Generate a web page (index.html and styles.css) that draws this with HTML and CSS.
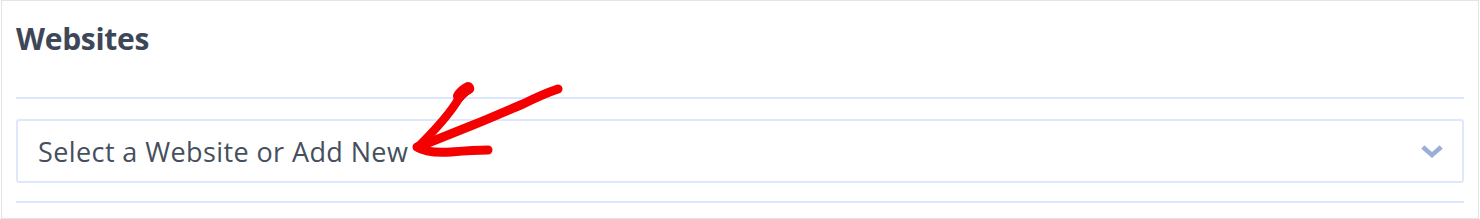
FILE: index.html
```html
<!DOCTYPE html>
<html lang="en">
<head>
    <meta charset="UTF-8">
    <meta name="viewport" content="width=device-width, initial-scale=1.0">
    <title>Websites</title>
    <link rel="stylesheet" href="styles.css">
</head>
<body>
    <div class="panel">
        <div class="panel-head">
            <h2>Websites</h2>
        </div>

        <div class="panel-body">
            <div class="select">
                <span class="select-label">Select a Website or Add New</span>
                <svg class="chevron" width="22" height="13" viewBox="0 0 22 13">
                    <path d="M3.5 3.5 L11 10 L18.5 3.5" fill="none" stroke="#9aaed8" stroke-width="4.5" stroke-linecap="square"/>
                </svg>
            </div>
        </div>

        <!-- hand-drawn annotation -->
        <svg class="arrow" width="180" height="90" viewBox="0 0 180 90">
            <g fill="none" stroke="#f40000" stroke-linecap="round" stroke-linejoin="round">
                <path d="M157 14 C 145 18, 132 24, 122 29 C 105 36, 90 43, 72 50 C 52 58, 32 66, 17 72" stroke-width="9"/>
                <path d="M69 14 C 62 18, 58 22, 55 28 C 46 42, 33 56, 17 72" stroke-width="8.5"/>
                <path d="M67 13 C 63 15, 60 18, 58 21" stroke-width="12"/>
                <path d="M16 72 C 22 76, 34 78, 50 77 C 62 76, 76 75, 87 75" stroke-width="9"/>
            </g>
        </svg>
    </div>
</body>
</html>
```

FILE: styles.css
```css
body {
    margin: 0;
    background: #fff;
    font-family: "Open Sans", "Liberation Sans", sans-serif;
}

.panel {
    position: relative;
    box-sizing: border-box;
    width: 1478px;
    height: 219px;
    margin-left: 1px;
    border: 1px solid #e4e4e4;
    padding: 0 14px;
}

.panel-head {
    height: 96px;
    border-bottom: 2px solid #dde7fb;
}

.panel-head h2 {
    margin: 0;
    padding-top: 18px;
    font-size: 30px;
    line-height: 40px;
    font-weight: 700;
    color: #3d4757;
    letter-spacing: -0.3px;
}

.panel-body {
    padding: 20px 0 18px;
    border-bottom: 2px solid #dde7fb;
}

.select {
    box-sizing: border-box;
    height: 64px;
    display: flex;
    align-items: center;
    justify-content: space-between;
    padding: 0 19px 0 20px;
    border: 2px solid #dfe7fb;
    border-radius: 3px;
}

.select-label {
    font-size: 27px;
    color: #454f5e;
    letter-spacing: 0.4px;
}

.chevron {
    display: block;
}

.arrow {
    position: absolute;
    left: 399px;
    top: 74px;
}
```
